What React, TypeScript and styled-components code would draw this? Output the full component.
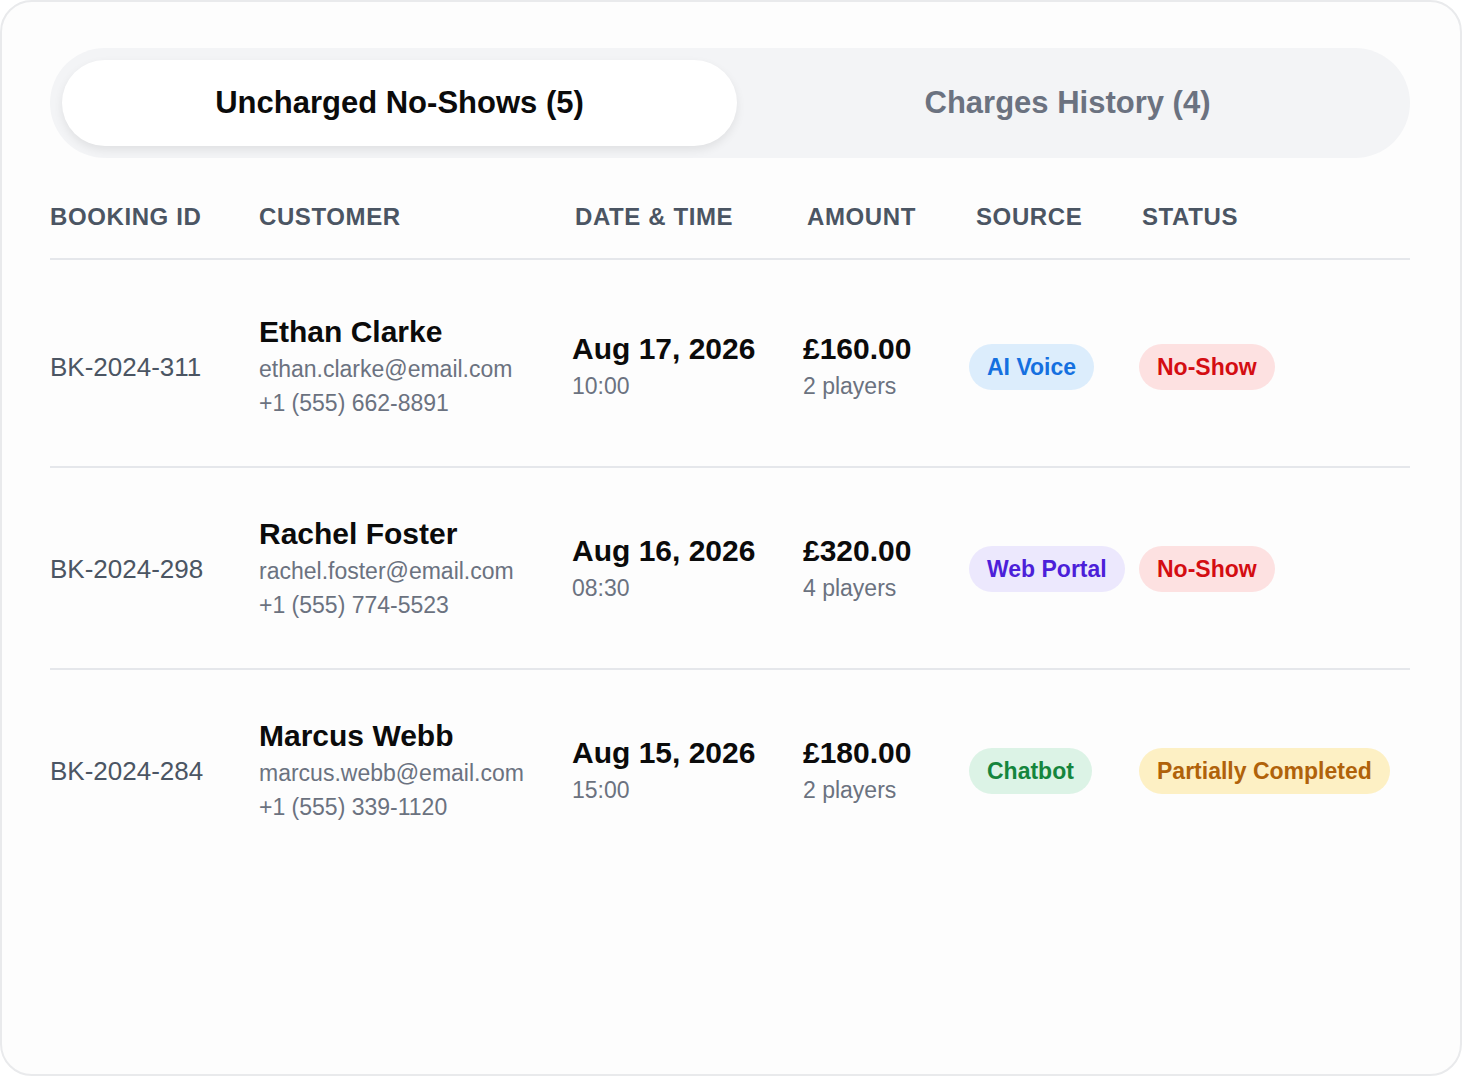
import React from "react";
import styled, { createGlobalStyle } from "styled-components";

const Global = createGlobalStyle`
  html, body { margin: 0; padding: 0; background: #ffffff; }
  body { font-family: "Liberation Sans", Arial, sans-serif; }
`;

const Card = styled.div`
  box-sizing: border-box;
  width: 1462px;
  height: 1076px;
  border: 2px solid #e9eaec;
  border-radius: 32px;
  background: #fdfdfd;
  padding: 46px 50px 0 48px;
`;

const TabBar = styled.div`
  display: flex;
  height: 110px;
  box-sizing: border-box;
  padding: 12px;
  border-radius: 55px;
  background: #f3f4f6;
`;

const Tab = styled.div<{ $active?: boolean }>`
  flex: ${(p) => (p.$active ? "0 0 675px" : "1")};
  display: flex;
  align-items: center;
  justify-content: center;
  border-radius: 44px;
  font-size: 31px;
  font-weight: 700;
  color: ${(p) => (p.$active ? "#0b0b0b" : "#6b7280")};
  background: ${(p) => (p.$active ? "#ffffff" : "transparent")};
  box-shadow: ${(p) => (p.$active ? "0 4px 10px rgba(0,0,0,0.08)" : "none")};
`;

const cols = "209px 313px 231px 166px 170px 1fr";

const HeaderRow = styled.div`
  display: grid;
  grid-template-columns: ${cols};
  margin-top: 45px;
  height: 55px;
  align-items: start;
  border-bottom: 2px solid #e5e7eb;
`;

const Th = styled.div<{ $shift?: number }>`
  font-size: 24px;
  font-weight: 700;
  color: #4b5563;
  letter-spacing: 0.6px;
  padding-left: ${(p) => p.$shift ?? 0}px;
`;

const Row = styled.div<{ $last?: boolean; $first?: boolean }>`
  display: grid;
  grid-template-columns: ${cols};
  height: 198px;
  padding-top: ${(p) => (p.$first ? "8px" : "2px")};
  align-items: center;
  border-bottom: ${(p) => (p.$last ? "none" : "2px solid #e5e7eb")};
`;

const Id = styled.div`
  font-size: 26px;
  color: #4b5563;
`;

const Stack = styled.div<{ $shift?: number }>`
  display: flex;
  flex-direction: column;
  margin-left: ${(p) => p.$shift ?? 0}px;
`;

const Strong = styled.div`
  font-size: 30px;
  font-weight: 700;
  color: #0b0b0b;
  line-height: 36px;
  margin-bottom: 2px;
`;

const Sub = styled.div`
  font-size: 23px;
  color: #6b7280;
  line-height: 34px;
`;

const Badges = styled.div`
  display: flex;
`;

const Badge = styled.span<{ $bg: string; $fg: string }>`
  display: inline-flex;
  align-items: center;
  height: 46px;
  padding: 0 18px;
  border-radius: 23px;
  background: ${(p) => p.$bg};
  color: ${(p) => p.$fg};
  font-size: 23px;
  font-weight: 700;
  white-space: nowrap;
`;

const badgeColors: Record<string, [string, string]> = {
  "AI Voice": ["#dcedfc", "#1570e0"],
  "Web Portal": ["#ece8fd", "#4c1fd9"],
  Chatbot: ["#dcf3e6", "#15853d"],
  "No-Show": ["#fde1e1", "#d40d12"],
  "Partially Completed": ["#fdf0c4", "#b0620a"],
};

const rows = [
  { id: "BK-2024-311", name: "Ethan Clarke", email: "ethan.clarke@email.com", phone: "+1 (555) 662-8891", date: "Aug 17, 2026", time: "10:00", amount: "£160.00", players: "2 players", source: "AI Voice", status: "No-Show" },
  { id: "BK-2024-298", name: "Rachel Foster", email: "rachel.foster@email.com", phone: "+1 (555) 774-5523", date: "Aug 16, 2026", time: "08:30", amount: "£320.00", players: "4 players", source: "Web Portal", status: "No-Show" },
  { id: "BK-2024-284", name: "Marcus Webb", email: "marcus.webb@email.com", phone: "+1 (555) 339-1120", date: "Aug 15, 2026", time: "15:00", amount: "£180.00", players: "2 players", source: "Chatbot", status: "Partially Completed" },
];

const B = ({ label }: { label: string }) => {
  const [bg, fg] = badgeColors[label];
  return <Badge $bg={bg} $fg={fg}>{label}</Badge>;
};

export default function App() {
  return (
    <>
      <Global />
      <Card>
        <TabBar>
          <Tab $active>Uncharged No-Shows (5)</Tab>
          <Tab>Charges History (4)</Tab>
        </TabBar>
        <HeaderRow>
          <Th>BOOKING ID</Th>
          <Th>CUSTOMER</Th>
          <Th $shift={3}>DATE &amp; TIME</Th>
          <Th $shift={4}>AMOUNT</Th>
          <Th $shift={7}>SOURCE</Th>
          <Th $shift={3}>STATUS</Th>
        </HeaderRow>
        {rows.map((r, i) => (
          <Row key={r.id} $first={i === 0} $last={i === rows.length - 1}>
            <Id>{r.id}</Id>
            <Stack>
              <Strong>{r.name}</Strong>
              <Sub>{r.email}</Sub>
              <Sub>{r.phone}</Sub>
            </Stack>
            <Stack>
              <Strong>{r.date}</Strong>
              <Sub>{r.time}</Sub>
            </Stack>
            <Stack>
              <Strong>{r.amount}</Strong>
              <Sub>{r.players}</Sub>
            </Stack>
            <Badges>
              <B label={r.source} />
            </Badges>
            <Badges>
              <B label={r.status} />
            </Badges>
          </Row>
        ))}
      </Card>
    </>
  );
}
